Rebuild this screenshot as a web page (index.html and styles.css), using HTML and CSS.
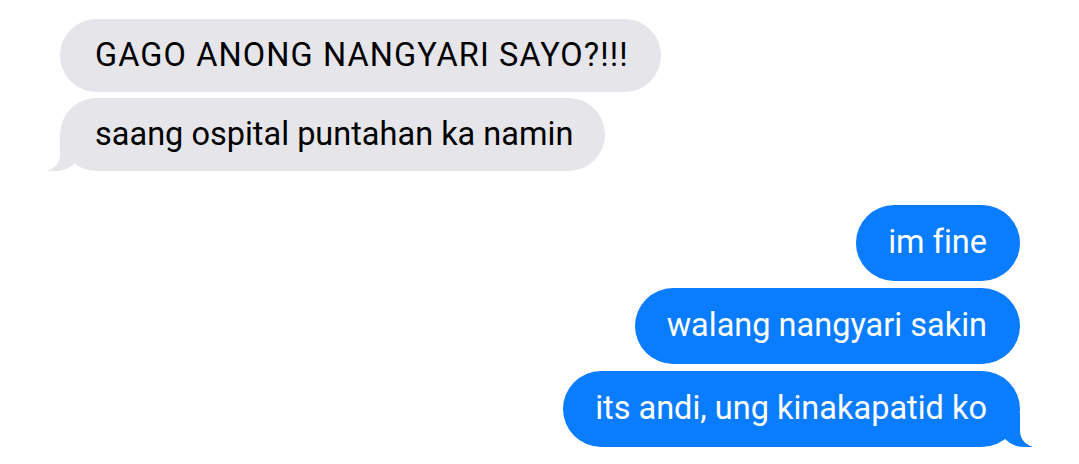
FILE: index.html
```html
<!DOCTYPE html>
<html lang="en">
<head>
  <meta charset="UTF-8" />
  <meta name="viewport" content="width=device-width, initial-scale=1.0" />
  <title>Messages</title>
  <link rel="stylesheet" href="styles.css">
</head>
<body>
  <div class="chat">
    <div class="group received">
      <div class="msg caps">GAGO ANONG NANGYARI SAYO?!!!</div>
      <div class="msg tail">saang ospital puntahan ka namin</div>
    </div>

    <div class="group sent">
      <div class="msg">im fine</div>
      <div class="msg">walang nangyari sakin</div>
      <div class="msg tail">its andi, ung kinakapatid ko</div>
    </div>
  </div>
</body>
</html>
```

FILE: styles.css
```css
body {
  margin: 0;
  padding: 0;
  background: #fff;
  font-family: Roboto, "Noto Sans", sans-serif;
}
.chat {
  padding: 19px 59px 0 60px;
  display: flex;
  flex-direction: column;
  gap: 34px;
}
.group {
  display: flex;
  flex-direction: column;
  gap: 6px;
}
.group.sent {
  align-items: flex-end;
  gap: 7px;
}
.group.received {
  align-items: flex-start;
}
.msg {
  position: relative;
  padding: 18px 32px 18px 35px;
  border-radius: 38px;
  font-size: 32.5px;
  line-height: 37px;
  white-space: nowrap;
  font-variant-ligatures: none;
}
.msg.caps {
  letter-spacing: 1.1px;
}
.received .msg {
  background: #e5e5ea;
  color: #000;
}
.sent .msg {
  background: #0a7cff;
  color: #fff;
  padding: 19px 33px 20px 32px;
}

/* bubble tails */
.received .tail::before {
  content: "";
  position: absolute;
  bottom: 0;
  left: -12px;
  width: 34px;
  height: 34px;
  background: #e5e5ea;
  border-bottom-right-radius: 26px;
}
.received .tail::after {
  content: "";
  position: absolute;
  bottom: 0;
  left: -24px;
  width: 24px;
  height: 36px;
  background: #fff;
  border-bottom-right-radius: 16px;
}
.sent .tail::before {
  content: "";
  position: absolute;
  bottom: 0;
  right: -12px;
  width: 34px;
  height: 34px;
  background: #0a7cff;
  border-bottom-left-radius: 26px;
}
.sent .tail::after {
  content: "";
  position: absolute;
  bottom: 0;
  right: -24px;
  width: 24px;
  height: 36px;
  background: #fff;
  border-bottom-left-radius: 16px;
}
```
